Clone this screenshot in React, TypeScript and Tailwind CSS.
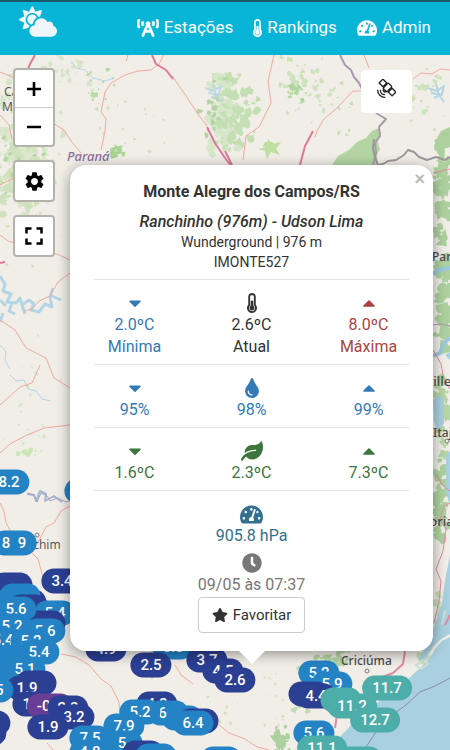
import type { ReactNode } from "react";
import {
  FaBroadcastTower,
  FaCaretDown,
  FaCaretUp,
  FaClock,
  FaCloudSun,
  FaLeaf,
  FaStar,
  FaTachometerAlt,
  FaThermometerHalf,
  FaTint,
} from "react-icons/fa";
import { MdFullscreen, MdSettings } from "react-icons/md";

type Tone = "blue" | "navy" | "teal" | "purple";

const TONES: Record<Tone, string> = {
  blue: "bg-[#2483c5]",
  navy: "bg-[#2b3f93]",
  teal: "bg-[#4dada8]",
  purple: "bg-[#6a3d94]",
};

// x / y are the centre of the pin on the map canvas, later pins lie on top
const PINS: [number, number, string, Tone][] = [
  [9, 427, "8.2", "blue"],
  [85, 436, "7.9", "blue"],
  [14, 488, "8  9", "blue"],
  [62, 526, "3.4", "navy"],
  [12, 530, "", "navy"],
  [26, 547, "4.5", "navy"],
  [20, 541, "", "blue"],
  [28, 552, "", "navy"],
  [-6, 548, "", "blue"],
  [55, 558, "5.4", "blue"],
  [45, 568, "", "navy"],
  [16, 554, "5.6", "blue"],
  [-4, 570, "", "blue"],
  [12, 571, "5.2", "blue"],
  [45, 576, "5.6", "blue"],
  [3, 585, "5.4", "blue"],
  [31, 586, "5.2", "blue"],
  [-9, 604, "5.6", "blue"],
  [16, 604, "", "blue"],
  [39, 597, "5.4", "blue"],
  [6, 618, "", "blue"],
  [25, 614, "5.1", "blue"],
  [36, 628, "", "navy"],
  [27, 633, "1.9", "navy"],
  [-7, 635, "5.5", "blue"],
  [33, 649, "1.6", "navy"],
  [50, 651, "-0.6", "purple"],
  [68, 653, "2.3", "navy"],
  [74, 662, "3.2", "navy"],
  [48, 672, "1.9", "navy"],
  [-10, 668, "3.1", "navy"],
  [-14, 678, "3.6", "navy"],
  [106, 594, "4.9", "navy"],
  [173, 592, "6.8", "blue"],
  [151, 610, "2.5", "navy"],
  [207, 605, "3.7", "navy"],
  [223, 616, "4.5", "navy"],
  [235, 625, "2.6", "navy"],
  [157, 649, "4.8", "navy"],
  [182, 663, "", "blue"],
  [168, 658, "6   ", "blue"],
  [140, 657, "5.2", "blue"],
  [198, 666, "", "navy"],
  [193, 668, "6.4", "blue"],
  [124, 671, "7.9", "blue"],
  [90, 683, "7.5", "blue"],
  [122, 688, "5", "blue"],
  [90, 697, "4.8", "blue"],
  [143, 698, "", "navy"],
  [156, 701, "", "blue"],
  [221, 704, "5.7", "blue"],
  [319, 618, "5.2", "blue"],
  [332, 629, "5.9", "blue"],
  [309, 639, "", "navy"],
  [316, 641, "4.4", "navy"],
  [341, 645, "", "teal"],
  [352, 651, "11.2", "teal"],
  [387, 633, "11.7", "teal"],
  [375, 665, "12.7", "teal"],
  [314, 678, "5.6", "blue"],
  [322, 693, "11.1", "teal"],
  [357, 704, "11.4", "teal"],
];

// [cx, cy, spread x, spread y, blobs, blob size, fill]
const FORESTS: [number, number, number, number, number, number, string][] = [
  [22, 120, 44, 50, 80, 7, "#dbe7cc"],
  [26, 70, 44, 60, 60, 4, "#d6e5c7"],
  [22, 125, 34, 46, 46, 6, "#cfe2bd"],
  [20, 110, 34, 50, 30, 3, "#b5d6a5"],
  [60, 15, 50, 26, 34, 3, "#d6e5c7"],
  [95, 32, 26, 22, 14, 3, "#b9d9a8"],
  [118, 98, 7, 6, 4, 5, "#a9d494"],
  [130, 75, 40, 36, 18, 2, "#cfe2bd"],
  [222, 60, 18, 52, 60, 6, "#d6e7c9"],
  [225, 60, 15, 48, 36, 4, "#c4dfb4"],
  [242, 52, 24, 44, 48, 5, "#c4dfb4"],
  [212, 60, 14, 40, 16, 3, "#b3d5a3"],
  [270, 90, 5, 5, 4, 4, "#b7e095"],
  [310, 30, 34, 30, 44, 3, "#cde2bd"],
  [298, 36, 12, 10, 10, 4, "#b2d6a2"],
  [330, 50, 50, 40, 20, 2, "#c4dfb4"],
  [425, 40, 25, 40, 22, 3, "#cde2bd"],
  [441, 90, 9, 20, 14, 5, "#add19e"],
  [24, 180, 40, 40, 18, 2, "#cfe2bd"],
  [34, 330, 36, 70, 26, 2, "#d6e5c7"],
  [30, 398, 16, 6, 14, 3, "#cbe6b6"],
  [443, 140, 9, 50, 40, 7, "#add19e"],
  [443, 240, 9, 60, 46, 7, "#add19e"],
  [443, 360, 9, 50, 26, 5, "#b5d6a5"],
  [441, 450, 8, 50, 30, 6, "#aed29f"],
  [441, 560, 7, 26, 12, 4, "#c4dfb4"],
  [282, 682, 14, 18, 26, 5, "#add19e"],
  [305, 636, 16, 30, 22, 4, "#c1dcb2"],
  [330, 603, 22, 10, 16, 5, "#b5d6a5"],
  [274, 640, 14, 40, 12, 2, "#cfe2bd"],
  [215, 650, 26, 26, 10, 2, "#cfe2bd"],
  [425, 607, 9, 9, 10, 4, "#c4dfb4"],
];

function makeRandom(seed: number) {
  let s = seed;
  return () => {
    s = (s * 16807) % 2147483647;
    return s / 2147483647;
  };
}

function forestPath(index: number) {
  const [cx, cy, sx, sy, count, size] = FORESTS[index];
  const rand = makeRandom(index * 977 + 131);
  let d = "";
  for (let i = 0; i < count; i++) {
    const x = cx + (rand() + rand() - 1) * sx;
    const y = cy + (rand() + rand() - 1) * sy;
    const r = size * (0.3 + rand() * 0.9);
    for (let k = 0; k < 9; k++) {
      const a = (k / 9) * Math.PI * 2;
      const rr = r * (0.4 + rand() * 0.8);
      d += `${k ? "L" : "M"}${(x + Math.cos(a) * rr).toFixed(1)} ${(y + Math.sin(a) * rr).toFixed(1)}`;
    }
    d += "Z";
  }
  return d;
}

function MapCanvas() {
  return (
    <svg
      aria-hidden="true"
      viewBox="0 0 450 695"
      preserveAspectRatio="xMinYMin slice"
      className="absolute inset-0 h-full w-full"
    >
      <rect width="450" height="695" fill="#f1eee8" />
      {FORESTS.map((f, i) => (
        <path key={i} d={forestPath(i)} fill={f[6]} />
      ))}
      <path
        d="M379 73l-7 3-6 7-9 4-8 8-11 6-6 9h46l-1-10 3-6-3-9 4-5z"
        fill="#b3d5a3"
      />
      <path d="M450 72l-9 4-4 7-3 8 5 4 11-3z" fill="#add19e" />
      <path d="M268 84l4 5 9-2-5 7 4 6-9-3-4 7-2-8-7-2 8-2z" fill="#bfe0a0" />

      {/* sea */}
      <path
        d="M450 582l-8 4-7 8-6 11-10 9-11 10-16 12-11 9-14 12-15 12-13 14-8 12h119z"
        fill="#a9d0de"
      />
      <path
        d="M450 500l-5 26-3 22-6 18-9 25-9 14 8-1 7-12 8-8 9-5z"
        fill="#a9d0de"
      />
      <path d="M433 345l6-5 5 5v24l-7 6-3-9zM446 400l4-4v54l-4-12zM445 300l5-3v8z" fill="#a9d0de" />
      <path d="M433 219l6-4 11-2M433 301l7-3 4-10 6-5" fill="none" stroke="#9cc9de" strokeWidth="4" />
      <path d="M442 570l3-14M416 610l10-6 2 5-7 5z" fill="none" stroke="#cbe0d8" strokeWidth="2" />

      {/* rivers */}
      <g fill="none" stroke="#b4d5e6" strokeLinejoin="round">
        <path
          d="M0 221l5 8-2 7 8 3-4 8 9 1 4-5 2 7 7-5 5 4-3 6 8 2 6-8 7 3-2-10 3-9M12 248l-3 8 6 3M22 250l3 9M0 245l6 6M3 258l-3 9M52 241l9 4"
          strokeWidth="3"
        />
        <path d="M428 33l9 3 7-5-2 8-8 4M436 29l3 11 5 7M431 38l12 2" strokeWidth="2" />
        <path d="M205 33l9 3 7-5-2 8-8 4M213 29l3 11 5 7M208 38l12 2" strokeWidth="2" opacity="0.8" />
        <path d="M72 7l4 6 9 2 8 8 12 3 9-3" strokeWidth="1" />
        <path d="M27 439l7 1 2 6 4-10 6 3-1 7 9-5 8 6" stroke="#a9b5d3" strokeWidth="2" />
        <path d="M0 290l6 7-1 8 5 9M10 320l6 6 8-1 4 9 8 2 6 8 9 2" strokeWidth="1" />
      </g>

      {/* state borders */}
      <g fill="none" strokeLinejoin="round">
        <path d="M340 0l5 10 6 5 3 7 5 6 4 8M376 58l10 6-7 8 1 9-5 7 1 10-3 12" stroke="#a99bb0" strokeWidth="2" />
        <path
          d="M374 84l-1 10 2 8 3 8 5-1 5-3 8-1 8-5 4-5 6 2 5 5 8 3 9-3 9 3 7-4"
          stroke="#9d979b"
          strokeWidth="2"
        />
        <path d="M27 438l7 2 3 7 4-9 6 3 3 5 8-3 8 4 6-2" stroke="#a5a7c6" strokeWidth="1" />
        <path d="M433 270l8-1 9 2" stroke="#a99bb0" strokeWidth="1" />
        <path d="M450 623l-15 8-15 6-14 13-14 10-14 14-14 21" stroke="#8c8aae" strokeWidth="1" />
      </g>

      {/* roads */}
      <g fill="none" stroke="#f2aaa0" strokeLinejoin="round">
        <path d="M0 17l12 5 15 9 20 31 9 8 8 5 7 11 10 12M101 95l4-19 1-12-5-7 4-20 6-9 14-8 13-4 13-1 8-6 5-10-1-9" />
        <path d="M172 21l12 17 14 21 9 12M375 36h-22l-16 17-14 12-6 11-2 6" />
        <path d="M274 0l-6 26 3 22-12 24-13 9-3 24M364 0l5 13M413 24l8-6 11 1 8-5 10 1" />
        <path d="M0 180l8 6 20 6 17 2 14 6 11 5M70 218l-12 9-8 14-11 5-7 8-8 2" />
        <path d="M0 265l15 10 11 18 20 10 8 20 16 10M0 350l20-18 12-4 8-18" />
        <path d="M0 398l10-9 15-8 19-8 26-3M0 448l4 8 2 12 9 16 15 12 8 8 5 18" />
        <path d="M37 489l9-17 8-4 7-12 9-5M61 599l15 3 13 8 12 14 10 7 8 16 1 12M47 688l6 7" />
        <path d="M175 610l6 10 12 9M152 590v34M217 668l12 10 16 6 12 8 12 3" />
        <path d="M0 60l9 10 3 14M128 0l-2 6M0 130l14-7 14-2" />
      </g>
      <g fill="none" stroke="#dd7a98" strokeWidth="2" strokeLinejoin="round">
        <path d="M152 0l4 9 10 6 7 9M207 72l8 16 10 15 6 8M313 76l-8 15-5 19M35 0l-5 9-3 8M0 208l5-1M225 96l7 14" />
      </g>
      <g fill="none" stroke="#e08aa2" strokeWidth="1" strokeLinejoin="round">
        <path d="M433 118l17-4M433 295l8 14 3 16 6 9M437 420l5 10 8 6" />
        <path d="M450 448l-6 3-4 14 6 9-3 22-7 18 5 12-2 20-5 22" />
        <path d="M450 560l-5 10M405 596l-2 13-10 9-16 6M339 646l-4 27" strokeWidth="2" />
      </g>
      <path d="M433 438l7-4 3 10-6 10-4-4z" fill="#add19e" />

      {/* towns */}
      <g fill="#f1eee8" stroke="#777" strokeWidth="1">
        <circle cx="37" cy="480" r="2" />
        <circle cx="367" cy="616" r="2" />
        <circle cx="447" cy="386" r="2" />
      </g>
    </svg>
  );
}

const PLACES = [
  { name: "Paraná", place: "left-[67px] top-[92px]", look: "text-[13px] font-medium italic text-[#8d6f9b]" },
  { name: "Campo", place: "left-[4px] top-[28px]", look: "text-[12px] text-[#5a5a5a]" },
  { name: "Mourão", place: "left-[2px] top-[43px]", look: "text-[12px] text-[#5a5a5a]" },
  { name: "Erechim", place: "left-[15px] top-[481px]", look: "text-[12px] text-[#5a5a5a]" },
  { name: "Criciúma", place: "left-[341px] top-[597px]", look: "text-[12px] font-medium text-[#4c4c4c]" },
  { name: "Paranaguá", place: "left-[432px] top-[193px]", look: "text-[12px] font-medium text-[#4c4c4c]" },
  { name: "Joinville", place: "left-[403px] top-[317px]", look: "text-[13px] font-medium text-[#4c4c4c]" },
  { name: "Itajaí", place: "left-[433px] top-[369px]", look: "text-[12px] font-medium text-[#4c4c4c]" },
  { name: "Florianópolis", place: "left-[419px] top-[457px]", look: "text-[13px] font-medium text-[#4c4c4c]" },
];

function SatelliteIcon() {
  return (
    <svg
      aria-hidden="true"
      viewBox="0 0 56 56"
      className="size-[19px]"
      fill="none"
      stroke="currentColor"
      strokeWidth="4"
      strokeLinejoin="round"
    >
      <g transform="translate(31 25) rotate(45)">
        <rect x="-27" y="-8" width="16" height="16" />
        <rect x="-8" y="-11" width="16" height="22" rx="3" />
        <rect x="11" y="-8" width="16" height="16" />
        <path d="M-11 0h3M8 0h3M-5 11a5 5 0 0 0 10 0" />
      </g>
      <path d="M2 33a21 21 0 0 0 21 21M10 34a12 12 0 0 0 12 12" strokeLinecap="round" />
    </svg>
  );
}

function Cell({ icon, value, label, tone }: { icon: ReactNode; value: string; label?: string; tone: string }) {
  return (
    <div className={`flex flex-col items-center leading-[22px] ${tone}`}>
      <span className="flex h-[22px] items-center">{icon}</span>
      <span>{value}</span>
      {label && <span>{label}</span>}
    </div>
  );
}

function Row({ children }: { children: ReactNode }) {
  return (
    <div className="border-t border-[#e6e6e6] pt-3 pb-[6px]">
      <div className="-mx-[18px] grid grid-cols-3">{children}</div>
    </div>
  );
}

function StationPopup() {
  return (
    <article className="absolute top-[110px] left-[70px] w-[363px] rounded-2xl bg-white px-6 pt-[17px] pb-[18px] text-center text-[16px] text-[#333] shadow-[0_3px_14px_rgba(0,0,0,0.4)]">
      <button
        type="button"
        aria-label="Fechar"
        className="absolute top-[4px] right-[8px] font-['Liberation_Sans'] text-[18px] leading-5 font-bold text-[#b9b9b9]"
      >
        ×
      </button>
      <h2 className="leading-5 font-bold">Monte Alegre dos Campos/RS</h2>
      <p className="mt-[10px] leading-5 font-medium italic">Ranchinho (976m) - Udson Lima</p>
      <p className="text-[14px] leading-5">Wunderground | 976 m</p>
      <p className="mb-[7px] text-[14px] leading-5">IMONTE527</p>

      <Row>
        <Cell icon={<FaCaretDown size={20} />} value="2.0ºC" label="Mínima" tone="text-[#337ab7]" />
        <Cell icon={<FaThermometerHalf size={20} />} value="2.6ºC" label="Atual" tone="text-[#333]" />
        <Cell icon={<FaCaretUp size={20} />} value="8.0ºC" label="Máxima" tone="text-[#a94442]" />
      </Row>
      <Row>
        <Cell icon={<FaCaretDown size={20} />} value="95%" tone="text-[#337ab7]" />
        <Cell icon={<FaTint size={20} />} value="98%" tone="text-[#337ab7]" />
        <Cell icon={<FaCaretUp size={20} />} value="99%" tone="text-[#337ab7]" />
      </Row>
      <Row>
        <Cell icon={<FaCaretDown size={20} />} value="1.6ºC" tone="text-[#3c763d]" />
        <Cell icon={<FaLeaf size={22} />} value="2.3ºC" tone="text-[#3c763d]" />
        <Cell icon={<FaCaretUp size={20} />} value="7.3ºC" tone="text-[#3c763d]" />
      </Row>
      <div className="border-t border-[#e6e6e6] pt-3">
        <Cell icon={<FaTachometerAlt size={23} />} value="905.8 hPa" tone="text-[#31708f]" />
        <div className="mt-[5px]">
          <Cell icon={<FaClock size={20} />} value="09/05 às 07:37" tone="text-[#777]" />
        </div>
      </div>
      <button
        type="button"
        className="mx-auto mt-px flex h-9 items-center gap-[5px] rounded border border-[#ccc] px-[13px] text-[15px]"
      >
        <FaStar size={16} />
        Favoritar
      </button>
      <svg
        aria-hidden="true"
        viewBox="0 0 26 13"
        className="absolute top-full left-1/2 h-[13px] w-[26px] -translate-x-1/2 fill-white"
      >
        <path d="M0 0h26L13 13z" />
      </svg>
    </article>
  );
}

function MapControls() {
  const box = "w-[42px] overflow-hidden rounded border-2 border-[#b3b1ac] bg-white text-black";
  return (
    <div className="absolute top-[13px] left-[13px] flex flex-col gap-[13px]">
      <div className={box}>
        <button type="button" aria-label="Aproximar" className="flex h-[38px] w-full items-center justify-center border-b border-[#ccc]">
          <svg viewBox="0 0 14 14" className="size-[14px]">
            <path d="M7 0v14M0 7h14" stroke="currentColor" strokeWidth="2.6" />
          </svg>
        </button>
        <button type="button" aria-label="Afastar" className="flex h-[37px] w-full items-center justify-center">
          <svg viewBox="0 0 14 14" className="size-[14px]">
            <path d="M0 7h14" stroke="currentColor" strokeWidth="2.6" />
          </svg>
        </button>
      </div>
      <div className={box}>
        <button type="button" aria-label="Configurações" className="flex h-[38px] w-full items-center justify-center">
          <MdSettings size={23} />
        </button>
      </div>
      <div className={box}>
        <button type="button" aria-label="Tela cheia" className="flex h-[38px] w-full items-center justify-center">
          <MdFullscreen size={30} />
        </button>
      </div>
    </div>
  );
}

export default function App() {
  return (
    <div className="flex min-h-screen flex-col font-['Roboto',sans-serif]">
      <header className="flex h-[55px] items-start justify-between border-t-2 border-[#17586b] bg-[#08b5d7] px-[19px] text-white">
        <a href="#inicio" aria-label="Início" className="mt-1">
          <FaCloudSun className="h-[31px] w-[38px] text-[#eef6fa]" />
        </a>
        <nav className="flex h-[51px] items-center gap-5 text-[17px]">
          <a href="#estacoes" className="flex items-center gap-[5px]">
            <FaBroadcastTower className="h-[18px] w-[22px]" stroke="currentColor" strokeWidth="14" />
            Estações
          </a>
          <a href="#rankings" className="flex items-center gap-[5px]">
            <FaThermometerHalf className="h-[18px] w-[9px]" />
            Rankings
          </a>
          <a href="#admin" className="flex items-center gap-[5px]">
            <FaTachometerAlt className="h-[18px] w-5" />
            Admin
          </a>
        </nav>
      </header>

      <main className="relative flex-1 overflow-hidden bg-[#f1eee8]">
        <MapCanvas />
        {PLACES.map((p) => (
          <span
            key={p.name}
            className={`absolute font-['Noto_Sans',sans-serif] leading-[18px] whitespace-nowrap ${p.place} ${p.look}`}
          >
            {p.name}
          </span>
        ))}
        {PINS.map(([x, y, label, tone]) => (
          <span
            key={`${x}:${y}`}
            style={{ left: x, top: y }}
            className={`absolute flex h-[25px] min-w-[41px] -translate-1/2 items-center justify-center rounded-full px-[10px] text-[15px] font-medium whitespace-pre text-white ${TONES[tone]}`}
          >
            {label}
          </span>
        ))}
        <MapControls />
        <button
          type="button"
          aria-label="Satélite"
          className="absolute top-[15px] right-[38px] flex h-[43px] w-[51px] items-center justify-center rounded bg-white pb-[6px] text-[#222]"
        >
          <SatelliteIcon />
        </button>
        <StationPopup />
      </main>
    </div>
  );
}
